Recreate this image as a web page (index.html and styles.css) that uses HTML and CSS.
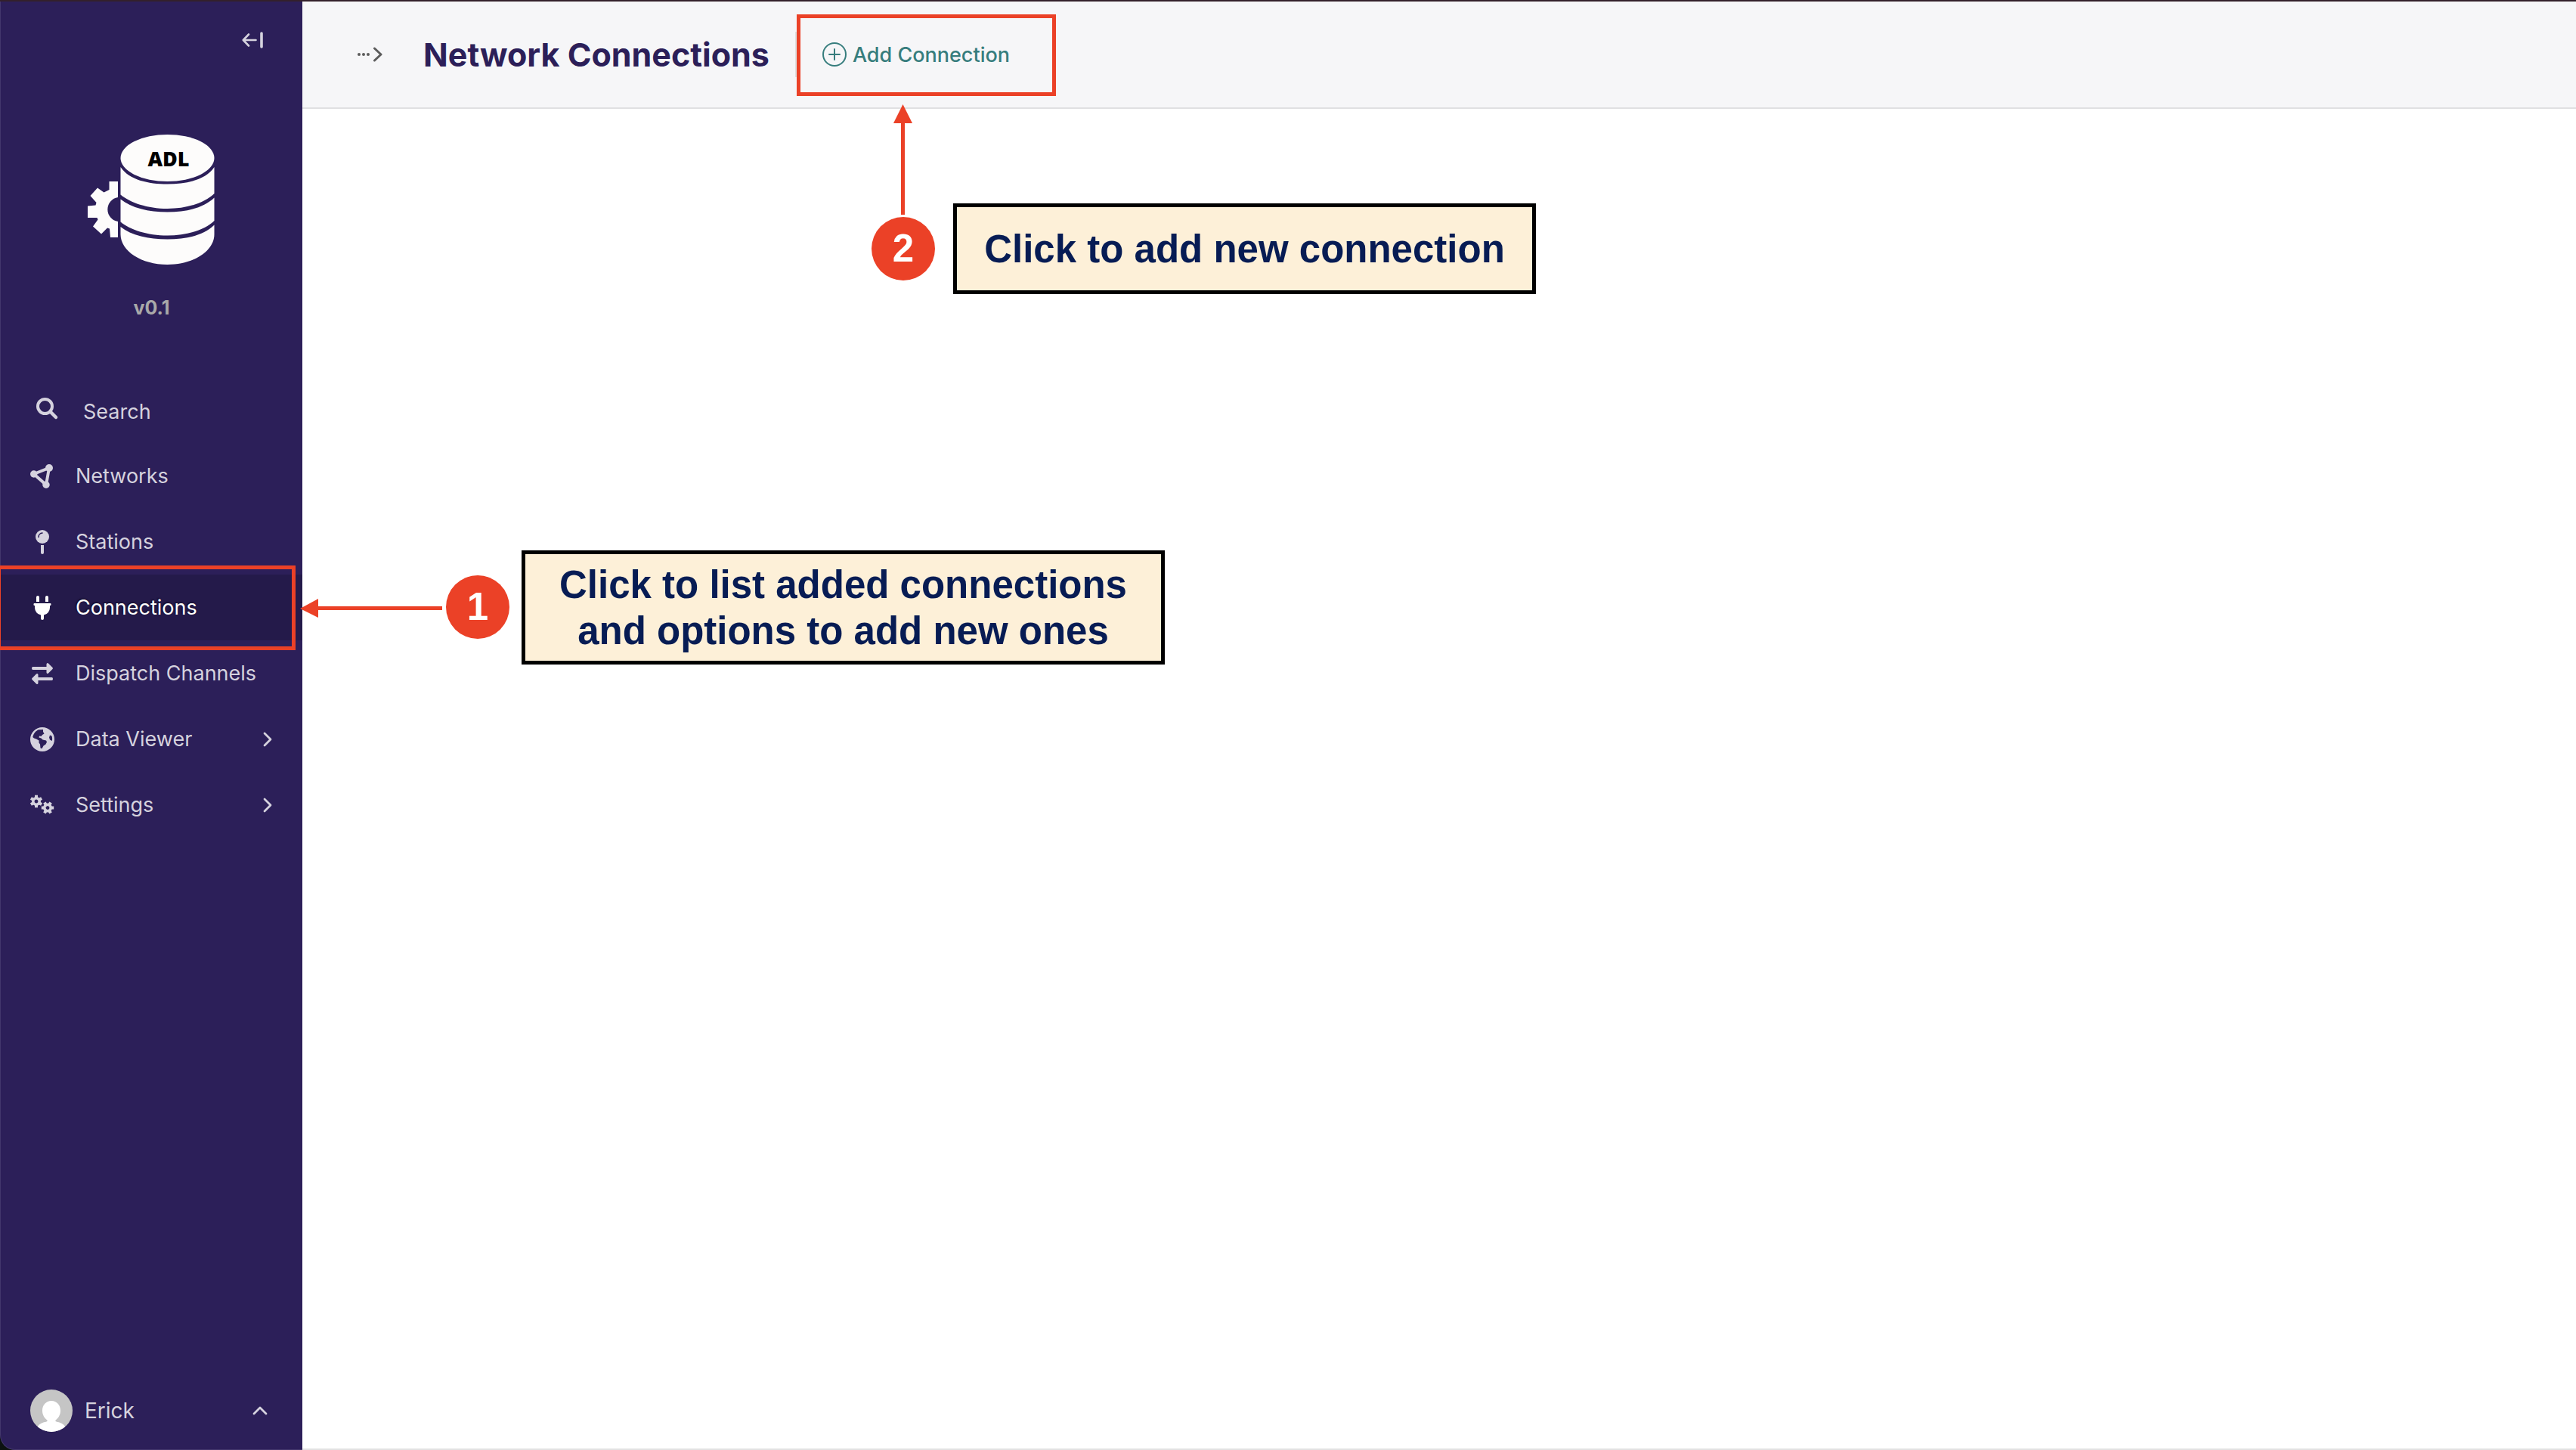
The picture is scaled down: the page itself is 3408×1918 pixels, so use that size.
FILE: index.html
```html
<!DOCTYPE html>
<html lang="en">
<head>
<meta charset="utf-8">
<meta name="viewport" content="width=device-width, initial-scale=1">
<title>Network Connections</title>
<link rel="stylesheet" href="styles.css">
</head>
<body>
<div class="app">
  <aside class="sidebar">
    <button class="collapse" type="button" aria-label="Collapse sidebar">
      <svg width="28" height="22" viewBox="0 0 28 22" fill="none" stroke="currentColor" stroke-linecap="round" stroke-linejoin="round"><path d="M18.500 11H2M9 3.500L1.800 11L9 18.500" stroke-width="2.600"/><path d="M26 2v18" stroke-width="3.600"/></svg>
    </button>
    <a class="logo" href="#" aria-label="ADL home">
      <svg width="168" height="172" viewBox="0 0 168 172">
        <g fill="#fdfcfb">
          <path d="M40 62V83A16.200 16.200 0 0 0 40 115V136L30 136L29 124.500L26 123.500L18 131.500L7 121.500L13.500 112.500L12.500 110L0 110V94.500L10.500 93.500L11.500 90L3.500 81L13 70.500L21.500 76.500L28.500 73V62Z"/>
          <ellipse cx="105.500" cy="31" rx="62" ry="31"/>
          <path d="M43.500 43C55 60 80 65.500 105.500 65.500S156 60 167.500 43V78C155 90 132 98 105.500 98S56 90 43.500 79.500Z"/>
          <path d="M43.500 85.500C58 97 80 102.500 105.500 102.500S153 97 167.500 83.500V114C155 126 132 133.500 105.500 133.500S56 126 43.500 115.500Z"/>
          <path d="M43.500 122C58 133.500 80 138.500 105.500 138.500S153 133.500 167.500 119.500V132C167.500 154 140 172 105.500 172S43.500 154 43.500 132Z"/>
        </g>
        <text x="107" y="42" text-anchor="middle" class="logo-text">ADL</text>
      </svg>
    </a>
    <p class="version">v0.1</p>
    <nav class="nav">
      <a class="nav-item nav-search" href="#">
        <svg width="32" height="32" viewBox="0 0 32 32" fill="none" stroke="currentColor" stroke-linecap="round"><circle cx="13.500" cy="13.500" r="9.500" stroke-width="4"/><path d="M20.500 20.500L28 28" stroke-width="4.500"/></svg>
        <span>Search</span>
      </a>
      <a class="nav-item" href="#">
        <svg width="32" height="32" viewBox="0 0 32 32" fill="currentColor"><path d="M4.700 13L25 5L21 27.300Z" fill="none" stroke="currentColor" stroke-width="4"/><circle cx="4.700" cy="13" r="4.700"/><circle cx="25" cy="5" r="5"/><circle cx="21" cy="27.300" r="4.700"/></svg>
        <span>Networks</span>
      </a>
      <a class="nav-item" href="#">
        <svg width="32" height="32" viewBox="0 0 32 32" fill="currentColor"><circle cx="16" cy="9" r="9"/><path d="M14 20h4v10a2 2 0 0 1-4 0z"/><path d="M11 9.500A5.500 5.500 0 0 1 16 4" fill="none" stroke="#2c1f59" stroke-width="1.600" stroke-linecap="round"/></svg>
        <span>Stations</span>
      </a>
      <a class="nav-item active" href="#" aria-current="page">
        <svg width="32" height="32" viewBox="0 0 32 32" fill="currentColor"><path d="M10 0a2 2 0 0 1 2 2v6H8V2a2 2 0 0 1 2-2zM22 0a2 2 0 0 1 2 2v6h-4V2a2 2 0 0 1 2-2zM5.500 10h21a1 1 0 0 1 1 1v1a1 1 0 0 1-1 1H26v3a10 10 0 0 1-8 9.600V30a2 2 0 0 1-4 0v-4.400A10 10 0 0 1 6 16v-3h-.5a1 1 0 0 1-1-1v-1a1 1 0 0 1 1-1z"/></svg>
        <span>Connections</span>
      </a>
      <a class="nav-item" href="#">
        <svg width="32" height="32" viewBox="0 0 32 32" fill="currentColor"><path d="M3.500 7H21.500V3.500Q22 1 24 2.500L29.500 8Q30.500 9 29.500 10L24 15.500Q22 17 21.500 14.500V11H3.500Q2 11 2 9T3.500 7zM28.500 21H10.500V17.500Q10 15 8 16.500L2.500 22Q1.500 23 2.500 24L8 29.500Q10 31 10.500 28.500V25H28.500Q30 25 30 23T28.500 21z"/></svg>
        <span>Dispatch Channels</span>
      </a>
      <a class="nav-item" href="#">
        <svg width="32" height="32" viewBox="0 0 32 32"><circle cx="16" cy="16" r="16" fill="currentColor"/><path d="M3.300 13C4.500 8 7.500 4.500 11 3.200L17 3V6L18.500 8.500L16 10L14.500 12L12 11.500L11.500 13.500L14.500 14.500L16.500 16.500L21 17.500L22 19.500L20.500 22.500L17.500 24.500L15.500 28.300L13.500 27.500L13 22.500L11.500 20.500V17.500L8 15.500L5 14.500zM26 10.500L28.500 11.500C29.300 14 29.300 16 28.800 18L26 16.500L25 13.500z" fill="#2c1f59"/></svg>
        <span>Data Viewer</span>
        <svg class="chevron" width="12" height="20" viewBox="0 0 12 20" fill="none" stroke="currentColor" stroke-width="2.800" stroke-linecap="round" stroke-linejoin="round"><path d="M2 2l8 8l-8 8"/></svg>
      </a>
      <a class="nav-item" href="#">
        <svg width="32" height="32" viewBox="0 0 32 32" fill="none" stroke="currentColor">
          <g transform="translate(8 11)"><circle r="4.200" stroke-width="3.600"/><path d="M0-8.200V-5M0 8.200V5M7.100-4.100L4.300-2.500M-7.100 4.100L-4.300 2.500M-7.100-4.100L-4.300-2.500M7.100 4.100L4.300 2.500" stroke-width="4"/></g>
          <g transform="translate(23 19.500) rotate(30)"><circle r="4.200" stroke-width="3.600"/><path d="M0-8.200V-5M0 8.200V5M7.100-4.100L4.300-2.500M-7.100 4.100L-4.300 2.500M-7.100-4.100L-4.300-2.500M7.100 4.100L4.300 2.500" stroke-width="4"/></g>
        </svg>
        <span>Settings</span>
        <svg class="chevron" width="12" height="20" viewBox="0 0 12 20" fill="none" stroke="currentColor" stroke-width="2.800" stroke-linecap="round" stroke-linejoin="round"><path d="M2 2l8 8l-8 8"/></svg>
      </a>
    </nav>
    <button class="account" type="button">
      <svg width="56" height="56" viewBox="0 0 56 56"><clipPath id="avatar"><circle cx="28" cy="28" r="28"/></clipPath><g clip-path="url(#avatar)"><path d="M0 0h56v56H0z" fill="#c5c5c5"/><path d="M28 15C35 15 40 20.500 40 28C40 33.500 37 38 33.500 40.500C33 42 34 42.500 36 43C41 43.500 46 47 47 51V56H9V51C10 47 15 43.500 20 43C22 42.500 23 42 22.500 40.500C19 38 16 33.500 16 28C16 20.500 21 15 28 15z" fill="#fff"/></g></svg>
      <span>Erick</span>
      <svg class="chevron" width="20" height="12" viewBox="0 0 20 12" fill="none" stroke="currentColor" stroke-width="2.800" stroke-linecap="round" stroke-linejoin="round"><path d="M2 10l8-8l8 8"/></svg>
    </button>
  </aside>
  <main class="main">
    <header class="header">
      <button class="crumbs" type="button" aria-label="Show breadcrumbs">
        <svg width="34" height="20" viewBox="0 0 34 20"><g fill="#5c5c5c"><circle cx="2" cy="10" r="2"/><circle cx="8" cy="10" r="2"/><circle cx="14" cy="10" r="2"/></g><path d="M22.500 2L31 10L22.500 18" fill="none" stroke="#5c5c5c" stroke-width="3" stroke-linecap="round" stroke-linejoin="round"/></svg>
      </button>
      <h1>Network Connections</h1>
      <div class="actions">
        <a class="add" href="#">
          <svg width="32" height="32" viewBox="0 0 32 32" fill="none" stroke="currentColor" stroke-width="2" stroke-linecap="round"><circle cx="16" cy="16" r="15"/><path d="M16 9v14M9 16h14"/></svg>
          <span>Add Connection</span>
        </a>
      </div>
    </header>
  </main>

  <div class="frame frame-nav"></div>
  <svg class="arrow arrow-nav" width="188" height="26" viewBox="0 0 188 26" fill="#eb4127"><path d="M0 13L24 0V10H188V15H24V25z"/></svg>
  <div class="step step-nav">1</div>
  <p class="note note-nav">Click to list added connections<br>and options to add new ones</p>

  <div class="frame frame-add"></div>
  <svg class="arrow arrow-add" width="26" height="146" viewBox="0 0 26 146" fill="#eb4127"><path d="M12.500 0L25 25H15V146H10V25H0z"/></svg>
  <div class="step step-add">2</div>
  <p class="note note-add">Click to add new connection</p>
</div>
</body>
</html>
```
FILE: styles.css
```css
* { box-sizing: border-box; }

body {
  margin: 0;
  background: #0c1210;
  font-family: Inter, "Liberation Sans", sans-serif;
  font-size: 27px;
  color: #2c1f59;
}

h1, p { margin: 0; }
a { color: inherit; text-decoration: none; }
button { padding: 0; border: 0; background: none; color: inherit; font: inherit; cursor: pointer; }
svg { display: block; flex: none; }

.app {
  position: relative;
  display: grid;
  grid-template-columns: 400px 1fr;
  min-height: 100vh;
  border-top: 2px solid #33202b;
  background: linear-gradient(90deg, #0c1210 200px, #fff 200px);
}

/* Sidebar */
.sidebar {
  display: flex;
  flex-direction: column;
  background: #2c1f59;
  border-left: 1px solid #43376c;
  border-bottom: 1px solid #43376c;
  border-bottom-left-radius: 20px;
  color: #d5d2de;
}
.collapse { align-self: flex-end; margin: 40px 52px 0 0; }
.logo { margin: 114px 0 0 115px; }
.logo-text { font: 800 27px "Open Sans", sans-serif; fill: #000; }
.version {
  margin-top: 41px;
  font-size: 25px;
  font-weight: 700;
  line-height: 32px;
  text-align: center;
  color: #a9a9a9;
}
.nav { margin-top: 76px; }
.nav-item {
  display: flex;
  align-items: center;
  gap: 28px;
  height: 87px;
  padding: 0 40px 0 39px;
}
.nav-search { padding-left: 45px; padding-top: 3px; gap: 32px; }
.nav-search svg { margin-bottom: 8px; }
.active {
  background: #241a4a;
  color: #fff;
  text-shadow: -1px -1px 2px #0d0820;
}
.chevron { margin-left: auto; }
.account {
  display: flex;
  align-items: center;
  gap: 16px;
  margin-top: auto;
  padding: 0 46px 23px 39px;
  font-size: 28px;
}

/* Content */
.main { background: #fff; border-bottom: 2px solid #e2e2e2; }
.header {
  display: flex;
  align-items: center;
  height: 142px;
  padding-left: 73px;
  background: #f6f6f8;
  border-bottom: 2px solid #e0e0e2;
}
h1 { margin-left: 53px; font-size: 43px; font-weight: 700; }
.actions {
  display: flex;
  align-items: center;
  height: 60px;
  margin-left: 34px;
  padding-left: 34px;
  border-left: 2px solid #e0e0e0;
}
.add { display: flex; align-items: center; gap: 8px; font-weight: 500; color: #367d7d; }

/* Annotations laid over the page */
.frame, .arrow, .step, .note { position: absolute; }
.frame { border: 5px solid #eb4127; pointer-events: none; }
.step {
  width: 84px;
  height: 84px;
  border-radius: 50%;
  background: #eb4127;
  color: #fff;
  font: bold 51px/84px "Liberation Sans", sans-serif;
  text-align: center;
}
.note {
  border: 5px solid #000;
  background: #fdf0d8;
  color: #071c54;
  font: bold 51px/61px "Liberation Sans", sans-serif;
  text-align: center;
}
.frame-nav { left: -4px; top: 746px; width: 395px; height: 112px; }
.arrow-nav { left: 397px; top: 790px; }
.step-nav { left: 590px; top: 759px; }
.note-nav { left: 690px; top: 726px; width: 851px; padding: 10px 0 9px; }
.frame-add { left: 1054px; top: 17px; width: 343px; height: 108px; }
.arrow-add { left: 1182px; top: 136px; }
.step-add { left: 1153px; top: 285px; }
.note-add { left: 1261px; top: 267px; width: 771px; padding: 25px 0 24px; }
```
